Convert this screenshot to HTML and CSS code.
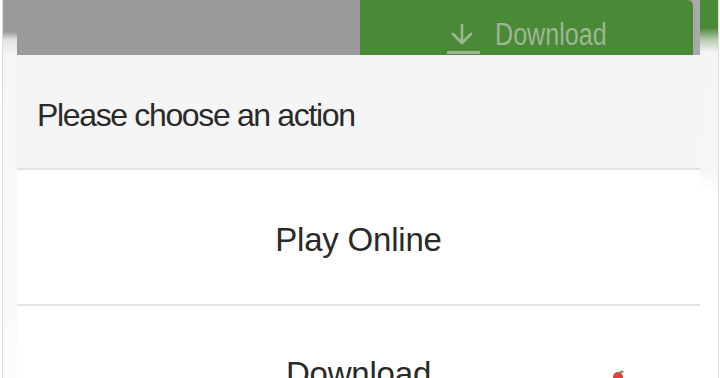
FILE: index.html
```html
<!DOCTYPE html>
<html lang="en">
<head>
<meta charset="utf-8">
<title>Choose an action</title>
<link rel="stylesheet" href="styles.css">
</head>
<body>
<div class="screen">
  <div class="edge edge-left"></div>
  <div class="main">
    <div class="backdrop">
      <div class="dl-button">
        <svg class="dl-icon" width="36" height="35" viewBox="0 0 36 35" aria-hidden="true">
          <path d="M17 4 V22 M8 13 L17 22 L26 13" fill="none" stroke="#9fb596" stroke-width="2.6" stroke-linecap="round" stroke-linejoin="round"/>
          <rect x="2" y="30" width="33" height="3" fill="#9fb596"/>
        </svg>
        <span class="dl-label">Download</span>
      </div>
    </div>
    <div class="dialog">
      <div class="dialog-header">Please choose an action</div>
      <div class="option option-first">Play Online</div>
      <div class="option option-second">Download
        <svg class="fruit" width="16" height="14" viewBox="0 0 16 14" aria-hidden="true">
          <circle cx="8" cy="11" r="5" fill="#d9453c"/>
          <path d="M9 6 Q12 3 14 6 Q11 8 9 6 Z" fill="#5ea04a"/>
        </svg>
      </div>
    </div>
  </div>
  <div class="edge edge-right"></div>
</div>
</body>
</html>
```

FILE: styles.css
```css
html, body {
  margin: 0;
  padding: 0;
  background: #ffffff;
}

.screen {
  width: 720px;
  height: 378px;
  overflow: hidden;
  display: flex;
  font-family: "Liberation Sans", Arial, sans-serif;
  color: #2a2a2a;
}

.edge {
  flex: none;
  height: 100%;
}

.edge-left {
  width: 17px;
  background:
    linear-gradient(to right, #ffffff 0 2px, #dcdcdc 2px 3px, transparent 3px),
    linear-gradient(to bottom, #9b9b9b 0 32px, #e4e4e4 40px, #f6f6f6 55px, #fbfbfb 100%);
}

.edge-right {
  width: 20px;
  background:
    linear-gradient(to right, transparent 0 18px, #dcdcdc 18px 19px, #ffffff 19px),
    linear-gradient(to bottom, #4a8a36 0 28px, #b9ccb0 40px, #f5f5f5 52px, #f6f6f6 170px, #ffffff 190px);
}

.main {
  flex: 1;
  display: flex;
  flex-direction: column;
}

.backdrop {
  height: 55px;
  flex: none;
  display: flex;
  justify-content: flex-end;
  padding-right: 7px;
  background: linear-gradient(to right, #9b9b9b 0 676px, #a9a9a9 676px);
}

.dl-button {
  width: 333px;
  height: 55px;
  background: #4a8a36;
  border-top-right-radius: 6px;
  box-sizing: border-box;
  padding: 19px 0 0 85px;
  display: flex;
  align-items: flex-start;
  gap: 14px;
}

.dl-icon {
  flex: none;
  margin-top: 2px;
}

.dl-label {
  font-family: "Liberation Sans", Arial, sans-serif;
  font-size: 31px;
  line-height: 31px;
  color: #9fb596;
  display: inline-block;
  transform: scaleX(0.81);
  transform-origin: left center;
}

.dialog {
  flex: 1;
  display: flex;
  flex-direction: column;
  background: #ffffff;
}

.dialog-header {
  height: 115px;
  box-sizing: border-box;
  padding: 44px 0 0 20px;
  background: #f5f5f5;
  font-size: 32px;
  line-height: 32px;
  letter-spacing: -1.35px;
  border-bottom: 2px solid #e3e3e3;
}

.option {
  position: relative;
  display: flex;
  justify-content: center;
  font-size: 33px;
  line-height: 33px;
  letter-spacing: -0.2px;
}

.option-first {
  height: 136px;
  box-sizing: border-box;
  padding-top: 53px;
  border-bottom: 2px solid #e3e3e3;
}

.option-second {
  padding-top: 51px;
}

.fruit {
  position: absolute;
  left: 593px;
  top: 60px;
}
```
